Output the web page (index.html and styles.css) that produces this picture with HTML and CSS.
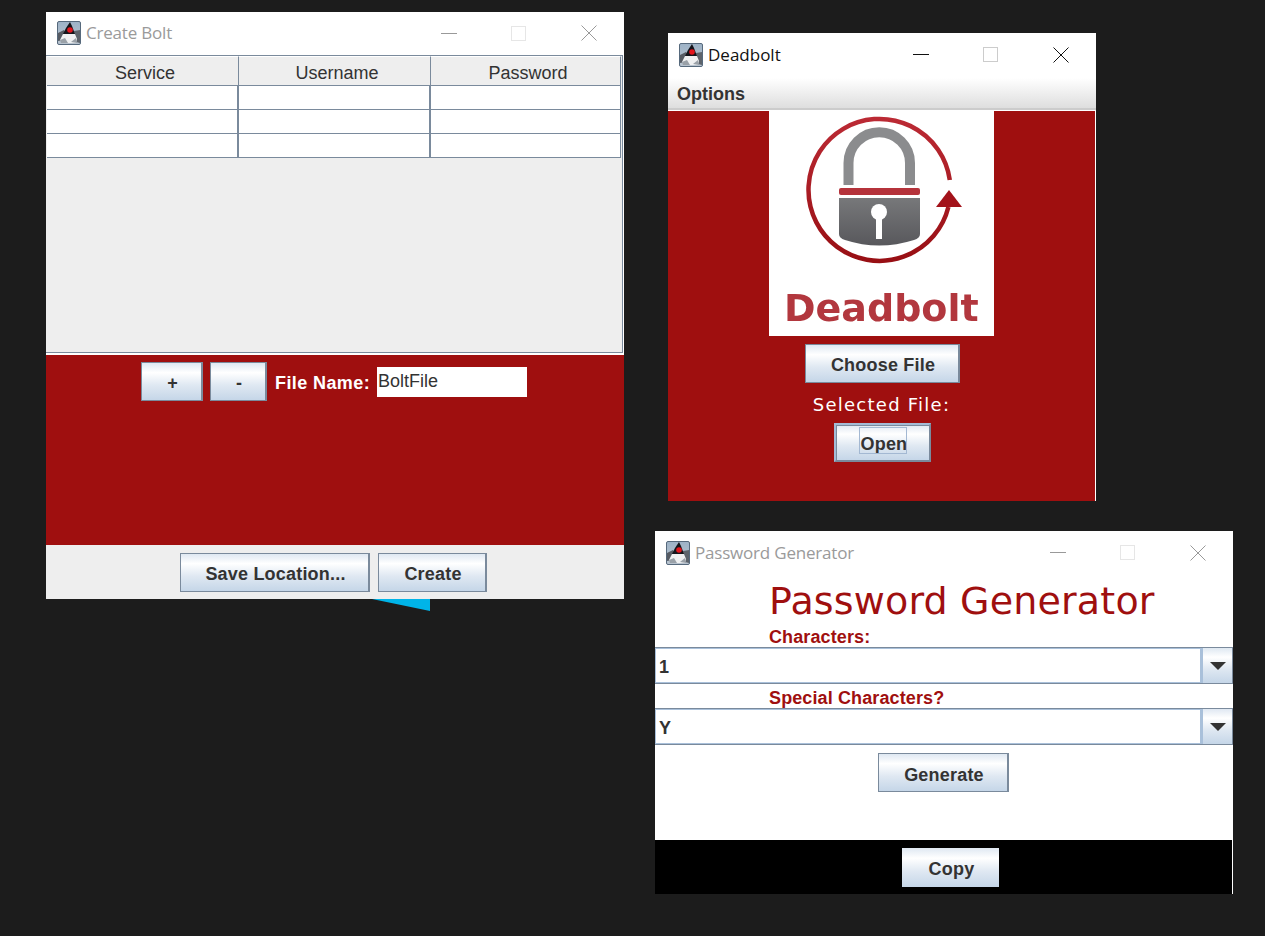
FILE: index.html
```html
<!DOCTYPE html>
<html lang="en">
<head>
  <meta charset="UTF-8">
  <title>Deadbolt</title>
  <link rel="stylesheet" href="styles.css">
</head>
<body>
  <svg class="defs" width="0" height="0">
    <defs>
      <linearGradient id="icon-bg" x1="0" y1="0" x2="0" y2="1">
        <stop offset="0" stop-color="#9db2c6"/>
        <stop offset="1" stop-color="#b9c4cf"/>
      </linearGradient>
      <symbol id="java-icon" viewBox="0 0 24 24">
        <rect x="0.5" y="0.5" width="23" height="23" rx="1.5" fill="url(#icon-bg)" stroke="#56697c"/>
        <path d="M1 12l6-3 2 5-3 5-5 1z" fill="#565b63"/>
        <path d="M23 9l-6 1 1 6 1 5 4 1z" fill="#5d636b"/>
        <path d="M13 1l2 4 3 8H6l3-6z" fill="#15151b"/>
        <path d="M6 13h12l2 5-1 4H5l-2-3z" fill="#eff0f1"/>
        <path d="M3 19l5-2 3 5H4z M14 21l5-4 1 5z" fill="#9aa1a8"/>
        <circle cx="13" cy="9" r="2.8" fill="#e3141c"/>
      </symbol>
    </defs>
  </svg>

  <!-- piece of another window behind Create Bolt -->
  <svg class="behind" width="60" height="13" viewBox="0 0 60 13"><polygon points="2,0 60,0 60,12" fill="#00b4e8"/></svg>

  <!-- Create Bolt -->
  <section class="window win-create">
    <div class="titlebar inactive">
      <svg class="app-icon"><use href="#java-icon"/></svg>
      <span class="title">Create Bolt</span>
      <div class="caption">
        <svg class="cap-btn" viewBox="0 0 70 16"><path d="M27 8.5h16" /></svg>
        <svg class="cap-btn" viewBox="0 0 70 16"><rect x="27.5" y="1.5" width="14" height="14"/></svg>
        <svg class="cap-btn" viewBox="0 0 70 16"><path d="M27.5 .5l15 15M42.5 .5l-15 15"/></svg>
      </div>
    </div>
    <div class="table-pane">
      <table class="bolt-table">
        <thead>
          <tr><th>Service</th><th>Username</th><th>Password</th></tr>
        </thead>
        <tbody>
          <tr><td></td><td></td><td></td></tr>
          <tr><td></td><td></td><td></td></tr>
          <tr><td></td><td></td><td></td></tr>
        </tbody>
      </table>
    </div>
    <div class="file-panel">
      <button class="btn btn-plus">+</button>
      <button class="btn btn-minus">-</button>
      <label class="file-label">File Name:</label>
      <div class="file-input">BoltFile</div>
    </div>
    <div class="save-panel">
      <button class="btn btn-save">Save Location...</button>
      <button class="btn btn-create">Create</button>
    </div>
  </section>

  <!-- Deadbolt main window -->
  <section class="window win-main">
    <div class="titlebar">
      <svg class="app-icon"><use href="#java-icon"/></svg>
      <span class="title">Deadbolt</span>
      <div class="caption">
        <svg class="cap-btn" viewBox="0 0 70 16"><path d="M27 7.5h16" /></svg>
        <svg class="cap-btn grey" viewBox="0 0 70 16"><rect x="27.5" y=".5" width="14" height="14"/></svg>
        <svg class="cap-btn" viewBox="0 0 70 16"><path d="M27.5 .5l15 15M42.5 .5l-15 15"/></svg>
      </div>
    </div>
    <div class="menubar">Options</div>
    <div class="main-panel">
      <svg class="logo" width="225" height="225" viewBox="0 0 225 225">
        <defs>
          <linearGradient id="ring" x1="0" y1="0" x2="0" y2="1">
            <stop offset="0" stop-color="#bb2a34"/>
            <stop offset="1" stop-color="#980f14"/>
          </linearGradient>
          <linearGradient id="lock" x1="0" y1="0" x2="0" y2="1">
            <stop offset="0" stop-color="#77787a"/>
            <stop offset="1" stop-color="#58585c"/>
          </linearGradient>
        </defs>
        <path d="M180.8 69A71 71 0 1 0 179.4 96" fill="none" stroke="url(#ring)" stroke-width="4.5"/>
        <polygon points="180,79 193,96 167,96" fill="#a3121a"/>
        <path d="M79.5 74V52A30.75 30.75 0 0 1 141 52V74" fill="none" stroke="#8b8c8e" stroke-width="10"/>
        <rect x="70" y="77" width="81" height="7" rx="2" fill="#b5333b"/>
        <path d="M70 87H151V123Q151 127 145 129Q110 140 76 129Q70 127 70 123Z" fill="url(#lock)"/>
        <circle cx="110" cy="101" r="8" fill="#fff"/>
        <rect x="107" y="103" width="6" height="25" fill="#fff"/>
        <text class="logo-text" x="15" y="210">Deadbolt</text>
      </svg>
      <button class="btn btn-choose">Choose File</button>
      <div class="selected">Selected File:</div>
      <button class="btn btn-open"><span class="focus-ring">Open</span></button>
    </div>
  </section>

  <!-- Password Generator -->
  <section class="window win-gen">
    <div class="titlebar inactive">
      <svg class="app-icon"><use href="#java-icon"/></svg>
      <span class="title">Password Generator</span>
      <div class="caption">
        <svg class="cap-btn" viewBox="0 0 70 16"><path d="M27 7.5h16" /></svg>
        <svg class="cap-btn" viewBox="0 0 70 16"><rect x="27.5" y=".5" width="14" height="14"/></svg>
        <svg class="cap-btn" viewBox="0 0 70 16"><path d="M27.5 .5l15 15M42.5 .5l-15 15"/></svg>
      </div>
    </div>
    <div class="gen-body">
      <h1 class="gen-heading">Password Generator</h1>
      <div class="gen-label">Characters:</div>
      <div class="combo">
        <div class="combo-value">1</div>
        <div class="combo-arrow"><span class="tri"></span></div>
      </div>
      <div class="gen-label second">Special Characters?</div>
      <div class="combo">
        <div class="combo-value">Y</div>
        <div class="combo-arrow"><span class="tri"></span></div>
      </div>
      <button class="btn btn-generate">Generate</button>
      <div class="copy-panel">
        <button class="btn btn-copy">Copy</button>
      </div>
    </div>
  </section>
</body>
</html>
```

FILE: styles.css
```css
/* Desktop */
body {
  margin: 0;
  height: 936px;
  overflow: hidden;
  background: #1c1c1c;
  font-family: 'Liberation Sans', Arial, sans-serif;
  color: #333;
}
.defs {
  position: absolute;
}
.behind {
  position: absolute;
  left: 370px;
  top: 599px;
}

/* Windows */
.window {
  position: absolute;
  display: flex;
  flex-direction: column;
  background: #fff;
  box-sizing: border-box;
}
.win-create {
  left: 46px;
  top: 12px;
  width: 578px;
  height: 587px;
}
.win-main {
  left: 668px;
  top: 33px;
  width: 428px;
  height: 468px;
}
.win-gen {
  left: 655px;
  top: 531px;
  width: 578px;
  height: 363px;
}

/* Title bar */
.titlebar {
  display: flex;
  align-items: center;
  height: 43px;
  flex: none;
  padding: 0 0 2px 11px;
  box-sizing: border-box;
  color: #111;
}
.win-main .titlebar {
  height: 45px;
}
.win-gen .titlebar {
  height: 47px;
  padding-bottom: 4px;
}
.app-icon {
  width: 24px;
  height: 24px;
  margin-right: 5px;
  flex: none;
}
.title {
  font-family: 'Open Sans', sans-serif;
  font-size: 17px;
}
.inactive .title {
  color: #9a9a9a;
  letter-spacing: -0.2px;
}
.caption {
  display: flex;
  margin-left: auto;
}
.cap-btn {
  width: 70px;
  height: 16px;
  fill: none;
  stroke: #111;
  stroke-width: 1;
}
.cap-btn.grey {
  stroke: #ccc;
}
.inactive .cap-btn {
  stroke: #999;
}
.inactive .cap-btn:nth-child(2) {
  stroke: #e6e6e6;
}

/* Swing style buttons */
.btn {
  font-family: 'Liberation Sans', Arial, sans-serif;
  font-size: 18px;
  font-weight: bold;
  letter-spacing: 0.2px;
  color: #333;
  height: 39px;
  padding: 3px 0 0 2px;
  box-sizing: border-box;
  flex: none;
  border: 1px solid #7a8a9c;
  border-right-width: 2px;
  background: linear-gradient(#dfe8f2 0%, #fff 26%, #dfe8f2 60%, #c5d6e8 100%);
}

/* Create Bolt */
.table-pane {
  height: 298px;
  flex: none;
  border: 1px solid #7a8a9c;
  border-left: 0;
  margin-right: 1px;
  background: #eee;
  box-sizing: border-box;
}
.bolt-table {
  width: 574px;
  margin-left: 1px;
  border-collapse: separate;
  border-spacing: 0;
  table-layout: fixed;
}
.bolt-table th {
  width: 192px;
  height: 30px;
  padding: 4px 0 0 5px;
  font-size: 18px;
  font-weight: normal;
  background: #eee;
  border-top: 1px solid #fff;
  border-right: 1px solid #7a8a9c;
  border-bottom: 1px solid #7a8a9c;
  box-sizing: border-box;
}
.bolt-table th:last-child {
  width: 190px;
}
.bolt-table td {
  height: 24px;
  padding: 0;
  background: #fff;
  border-right: 2px solid #7a8a9c;
  border-bottom: 1px solid #7a8a9c;
  box-sizing: border-box;
}
.bolt-table td:last-child {
  border-right-width: 1px;
}
.file-panel {
  height: 190px;
  margin-top: 2px;
  flex: none;
  display: flex;
  justify-content: center;
  align-items: flex-start;
  padding: 7px 2px 0 0;
  box-sizing: border-box;
  background: #9f0f0f;
}
.btn-plus {
  width: 62px;
}
.btn-minus {
  width: 57px;
  margin-left: 7px;
}
.file-label {
  width: 95px;
  margin: 11px 7px 0 8px;
  font-size: 18px;
  font-weight: bold;
  letter-spacing: 0.4px;
  white-space: nowrap;
  color: #fff;
}
.file-input {
  width: 150px;
  height: 30px;
  margin-top: 5px;
  padding-left: 1px;
  box-sizing: border-box;
  background: #fff;
  font-size: 18px;
  line-height: 28px;
}
.save-panel {
  flex: 1;
  display: flex;
  justify-content: center;
  gap: 8px;
  padding: 8px 3px 0 0;
  background: #eee;
}
.btn-save {
  width: 190px;
}
.btn-create {
  width: 109px;
}

/* Deadbolt main window */
.menubar {
  height: 32px;
  flex: none;
  padding-left: 9px;
  box-sizing: border-box;
  font-size: 18px;
  font-weight: bold;
  line-height: 32px;
  background: linear-gradient(#fff, #dedede);
  border-bottom: 2px solid #ccc;
}
.main-panel {
  flex: 1;
  display: flex;
  flex-direction: column;
  align-items: center;
  margin-top: 1px;
  margin-right: 1px;
  background: #9f0f0f;
}
.logo {
  flex: none;
  background: #fff;
  filter: blur(0.6px);
}
.logo-text {
  font-family: 'DejaVu Sans', sans-serif;
  font-size: 38px;
  font-weight: bold;
  fill: #b2373e;
}
.btn-choose {
  width: 155px;
  margin: 8px 0 0 2px;
}
.selected {
  margin-top: 10px;
  font-family: 'DejaVu Sans', sans-serif;
  font-size: 18px;
  letter-spacing: 1.25px;
  line-height: 24px;
  color: #fff;
}
.btn-open {
  width: 97px;
  margin: 6px 0 0 2px;
  padding: 0;
  border: 2px solid #a3bbd6;
  border-right-color: #7a8a9c;
  border-bottom-color: #7a8a9c;
  box-shadow: inset 1px 1px 0 #7a8a9c;
}
.focus-ring {
  display: inline-block;
  box-sizing: border-box;
  width: 48px;
  height: 27px;
  padding: 5px 0 0 1px;
  text-align: left;
  border: 1px solid #a3b8d2;
  overflow: hidden;
  white-space: nowrap;
  line-height: 22px;
}

/* Password Generator */
.gen-body {
  flex: 1;
  display: flex;
  flex-direction: column;
}
.gen-heading {
  margin: 0;
  padding-left: 114px;
  font-family: 'DejaVu Sans', sans-serif;
  font-size: 38px;
  font-weight: normal;
  letter-spacing: 0.17px;
  line-height: 46px;
  color: #9f0f0f;
}
.gen-label {
  padding-left: 114px;
  font-size: 18px;
  font-weight: bold;
  letter-spacing: 0.12px;
  line-height: 20px;
  margin-top: 3px;
  height: 20px;
  color: #9f0f0f;
}
.gen-label.second {
  margin-top: 4px;
}
.combo {
  display: flex;
  height: 37px;
  flex: none;
  box-sizing: border-box;
  border: 1px solid #7a8a9c;
  border-left: 0;
}
.combo-value {
  flex: 1;
  padding-left: 3px;
  font-size: 18px;
  font-weight: bold;
  line-height: 37px;
  box-sizing: border-box;
  border: 1px solid #a9c0da;
  border-right-width: 2px;
}
.combo-arrow {
  width: 29px;
  display: flex;
  align-items: center;
  justify-content: center;
  border-left: 1px solid #a9c0da;
  background: linear-gradient(#dfe8f2 0%, #fff 26%, #dfe8f2 60%, #c5d6e8 100%);
}
.tri {
  width: 0;
  height: 0;
  border-left: 8px solid transparent;
  border-right: 8px solid transparent;
  border-top: 8px solid #333;
}
.btn-generate {
  width: 131px;
  margin: 8px 0 0 223px;
  padding-top: 5px;
}
.copy-panel {
  margin-top: auto;
  margin-right: 1px;
  height: 54px;
  display: flex;
  justify-content: center;
  padding: 8px 0 0 14px;
  box-sizing: border-box;
  background: #000;
}
.btn-copy {
  width: 97px;
  border: 0;
}
```
